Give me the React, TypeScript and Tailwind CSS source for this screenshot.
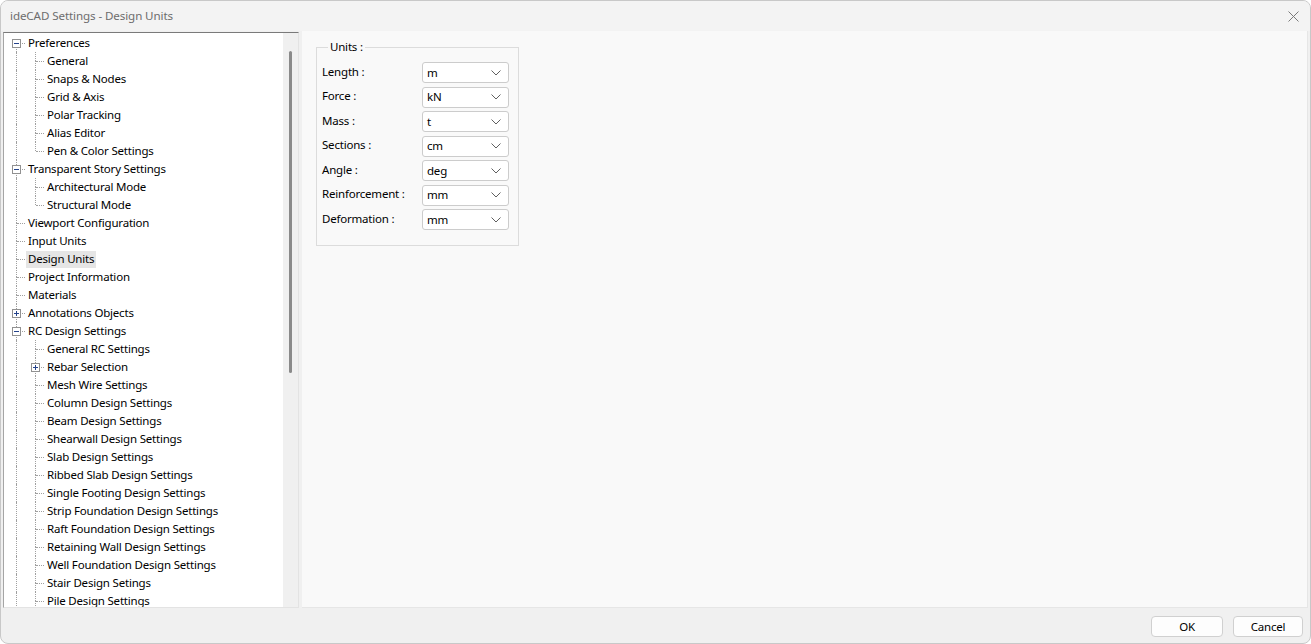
import React from 'react';

type Node = { label: string; open?: boolean; children?: Node[]; selected?: boolean; more?: boolean };

const tree: Node[] = [
  {
    label: 'Preferences',
    open: true,
    children: [
      { label: 'General' },
      { label: 'Snaps & Nodes' },
      { label: 'Grid & Axis' },
      { label: 'Polar Tracking' },
      { label: 'Alias Editor' },
      { label: 'Pen & Color Settings' },
    ],
  },
  {
    label: 'Transparent Story Settings',
    open: true,
    children: [{ label: 'Architectural Mode' }, { label: 'Structural Mode' }],
  },
  { label: 'Viewport Configuration' },
  { label: 'Input Units' },
  { label: 'Design Units', selected: true },
  { label: 'Project Information' },
  { label: 'Materials' },
  { label: 'Annotations Objects', open: false, children: [{ label: 'Dimensions' }] },
  {
    label: 'RC Design Settings',
    open: true,
    more: true,
    children: [
      { label: 'General RC Settings' },
      { label: 'Rebar Selection', open: false, children: [{ label: 'Rebars' }] },
      { label: 'Mesh Wire Settings' },
      { label: 'Column Design Settings' },
      { label: 'Beam Design Settings' },
      { label: 'Shearwall Design Settings' },
      { label: 'Slab Design Settings' },
      { label: 'Ribbed Slab Design Settings' },
      { label: 'Single Footing Design Settings' },
      { label: 'Strip Foundation Design Settings' },
      { label: 'Raft Foundation Design Settings' },
      { label: 'Retaining Wall Design Settings' },
      { label: 'Well Foundation Design Settings' },
      { label: 'Stair Design Setings' },
      { label: 'Pile Design Settings', more: true },
    ],
  },
];

type Row = {
  label: string;
  guides: boolean[]; // ancestor lines that continue
  last: boolean;
  first: boolean;
  box: 'plus' | 'minus' | null;
  selected?: boolean;
};

const flatten = (nodes: Node[], guides: boolean[], out: Row[]) => {
  nodes.forEach((n, i) => {
    const last = i === nodes.length - 1 && !n.more;
    out.push({
      label: n.label,
      guides,
      last,
      first: guides.length === 0 && i === 0,
      box: n.children ? (n.open ? 'minus' : 'plus') : null,
      selected: n.selected,
    });
    if (n.children && n.open) flatten(n.children, [...guides, !last], out);
  });
  return out;
};

const rows = flatten(tree, [], []);

const dot = 'border-dotted border-[#a0a0a0]';

const TreeRow: React.FC<{ row: Row }> = ({ row }) => (
  <div className="flex h-[18px] items-center whitespace-nowrap">
    {row.guides.map((g, i) => (
      <div key={i} className="relative h-full w-[19px] shrink-0">
        {g && <span className={`absolute left-[9px] top-0 bottom-0 border-l ${dot}`} />}
      </div>
    ))}
    <div className="relative h-full w-[19px] shrink-0">
      {!row.first && <span className={`absolute left-[9px] top-0 h-[9px] border-l ${dot}`} />}
      {!row.last && <span className={`absolute left-[9px] top-[9px] bottom-0 border-l ${dot}`} />}
      <span className={`absolute left-[10px] right-[1px] top-[9px] border-t ${dot}`} />
      {row.box && (
        <span className="absolute left-[5px] top-[5px] flex h-[9px] w-[9px] items-center justify-center border border-[#919191] bg-white">
          <span className="absolute h-px w-[5px] bg-[#25448c]" />
          {row.box === 'plus' && <span className="absolute h-[5px] w-px bg-[#25448c]" />}
        </span>
      )}
    </div>
    <span
      className={`h-[17px] px-[2px] leading-[16px] text-black ${row.selected ? 'bg-[#e5e5e5]' : ''}`}
    >
      {row.label}
    </span>
  </div>
);

const units: [string, string][] = [
  ['Length :', 'm'],
  ['Force :', 'kN'],
  ['Mass :', 't'],
  ['Sections :', 'cm'],
  ['Angle :', 'deg'],
  ['Reinforcement :', 'mm'],
  ['Deformation :', 'mm'],
];

const Combo: React.FC<{ value: string }> = ({ value }) => (
  <div className="flex h-[21px] w-[87px] items-center justify-between rounded-[3px] border border-[#cccccc] bg-white pl-[4px] pr-[7px]">
    <span>{value}</span>
    <svg width="10" height="6" viewBox="0 0 10 6" fill="none">
      <polyline points="0.5,0.5 5,5 9.5,0.5" stroke="#606060" strokeWidth="1" />
    </svg>
  </div>
);

export default function App() {
  return (
    <div
      className="flex h-[644px] w-[1311px] flex-col overflow-hidden rounded-[8px] border border-[#c8c8c8] bg-[#f0f0f0] text-[11.5px] tracking-[-0.2px] text-black"
      style={{ fontFamily: '"Noto Sans", "Segoe UI", sans-serif' }}
    >
      {/* title bar */}
      <div className="flex h-[30px] shrink-0 items-center justify-between bg-[#f3f3f3] pl-[9px] pr-[11px]">
        <span className="text-[11.6px] tracking-[-0.1px] text-[#6d6d6d]">ideCAD Settings - Design Units</span>
        <svg width="11" height="11" viewBox="0 0 11 11">
          <path d="M0.5 0.5 L10.5 10.5 M10.5 0.5 L0.5 10.5" stroke="#7a7a7a" strokeWidth="1" />
        </svg>
      </div>

      {/* body */}
      <div className="flex min-h-0 flex-1 pl-[2px] pr-[2px]">
        <div className="mt-[1px] flex w-[296px] shrink-0 border-t border-l border-b border-r border-t-[#7a7a7a] border-l-[#a5a5a5] border-r-[#e3e3e3] border-b-[#e3e3e3] bg-white">
          <div className="min-w-0 flex-1 overflow-hidden pt-[1px] pl-[3px]">
            {rows.map((r, i) => (
              <TreeRow key={i} row={r} />
            ))}
          </div>
          <div className="w-[15px] shrink-0 bg-[#f0f0f0] pt-[18px]">
            <div className="ml-[6px] h-[322px] w-[3px] rounded-full bg-[#8a8a8a]" />
          </div>
        </div>

        <div className="ml-[3px] flex-1 border-r border-b border-[#e6e6e6] bg-[#f9f9f9] pt-[9px] pl-[14px]">
          <fieldset className="w-[203px] border border-[#dcdcdc] pt-[8px] pr-[9px] pb-[15px] pl-[5px]">
            <legend className="ml-[6px] px-[2px] leading-[14px]">Units :</legend>
            <div className="flex flex-col gap-[3.5px]">
              {units.map(([label, value]) => (
                <div key={label} className="flex items-center justify-between">
                  <span className="-mt-[2px]">{label}</span>
                  <Combo value={value} />
                </div>
              ))}
            </div>
          </fieldset>
        </div>
      </div>

      {/* buttons */}
      <div className="flex h-[35px] shrink-0 items-start justify-end gap-[10px] pt-[8px] pr-[7px]">
        <button className="h-[21px] w-[72px] rounded-[4px] border border-[#d0d0d0] bg-[#fdfdfd]">OK</button>
        <button className="h-[21px] w-[70px] rounded-[4px] border border-[#d0d0d0] bg-[#fdfdfd]">Cancel</button>
      </div>
    </div>
  );
}
